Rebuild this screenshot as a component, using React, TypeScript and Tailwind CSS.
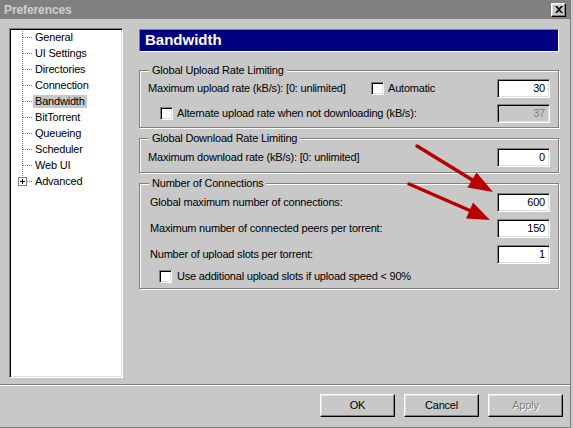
import React from "react";

const sunken =
  "border border-t-[#808080] border-l-[#808080] border-b-white border-r-white shadow-[inset_1px_1px_0_#000,inset_-1px_-1px_0_#dfdfdf]";
const raised =
  "border border-t-white border-l-white border-b-black border-r-black shadow-[inset_-1px_-1px_0_#808080,inset_1px_1px_0_#dfdfdf]";
const etched =
  "relative border border-[#808080] shadow-[inset_1px_1px_0_#fff,1px_1px_0_#fff]";

function Field({ value, disabled }: { value: string; disabled?: boolean }) {
  return (
    <div
      className={`${sunken} w-[53px] h-[19px] flex items-center justify-end pr-[4px] ${
        disabled ? "bg-[#c8c8c8] text-[#808080]" : "bg-white text-black"
      }`}
    >
      {value}
    </div>
  );
}

function Check() {
  return <div className={`${sunken} w-[13px] h-[13px] bg-white shrink-0`} />;
}

function Legend({ children }: { children: React.ReactNode }) {
  return (
    <div className="absolute -top-[7px] left-[9px] px-[3px] bg-[#c8c8c8] leading-[13px]">
      {children}
    </div>
  );
}

const treeItems = [
  "General",
  "UI Settings",
  "Directories",
  "Connection",
  "Bandwidth",
  "BitTorrent",
  "Queueing",
  "Scheduler",
  "Web UI",
  "Advanced",
];

function Tree() {
  return (
    <div className={`${sunken} relative w-[114px] h-[350px] bg-white`}>
      <svg className="absolute left-0 top-0" width="112" height="170">
        <line x1="12.5" y1="2" x2="12.5" y2="147" stroke="#808080" strokeDasharray="1 1" />
        {treeItems.slice(0, 9).map((_, i) => (
          <line
            key={i}
            x1="13"
            y1={8.5 + 16 * i}
            x2="23"
            y2={8.5 + 16 * i}
            stroke="#808080"
            strokeDasharray="1 1"
          />
        ))}
        <rect x="8.5" y="148.5" width="8" height="8" fill="white" stroke="#808080" />
        <line x1="10" y1="152.5" x2="15" y2="152.5" stroke="#000" />
        <line x1="12.5" y1="150" x2="12.5" y2="155" stroke="#000" />
        <line x1="17" y1="152.5" x2="23" y2="152.5" stroke="#808080" strokeDasharray="1 1" />
      </svg>
      <div className="relative flex flex-col">
        {treeItems.map((t) => (
          <div key={t} className="h-[16px] flex items-center pl-[23px]">
            <span
              className={`px-[2px] h-[13px] leading-[13px] ${
                t === "Bandwidth" ? "bg-[#c8c8c8]" : ""
              }`}
            >
              {t}
            </span>
          </div>
        ))}
      </div>
    </div>
  );
}

function Button({ label, disabled }: { label: string; disabled?: boolean }) {
  return (
    <div
      className={`${raised} w-[75px] h-[23px] flex items-center justify-center ${
        disabled ? "text-[#808080] [text-shadow:1px_1px_0_#fff]" : "text-black"
      }`}
    >
      {label}
    </div>
  );
}

export default function App() {
  return (
    <div
      className="relative w-[573px] h-[428px] bg-[#c8c8c8] text-[11px] tracking-[-0.2px] text-black overflow-hidden"
      style={{ fontFamily: '"Liberation Sans", Arial, sans-serif' }}
    >
      <div className="w-[571px] h-[428px] flex flex-col border-r border-b border-[#808080]">
        {/* Title bar */}
        <div className="h-[19px] bg-[#808080] flex items-center justify-between pl-[4px] pr-[4px] shrink-0">
          <span className="text-[12px] font-bold text-[#cfcfcf] tracking-[-0.1px]">Preferences</span>
          <div className={`${raised} w-[15px] h-[14px] bg-[#c8c8c8] flex items-center justify-center`}>
            <svg width="8" height="7" viewBox="0 0 8 7">
              <path d="M0 0h2l2 2 2-2h2L5 3.5 8 7H6L4 5 2 7H0l3-3.5z" fill="#000" />
            </svg>
          </div>
        </div>

        {/* Body */}
        <div className="h-[365px] flex pt-[9px] pl-[9px] shrink-0">
          <Tree />
          <div className="ml-[16px] w-[420px] mt-[1px] flex flex-col">
            <div className="h-[23px] bg-[#000080] border border-t-[#808080] border-l-[#808080] border-b-white border-r-white flex items-center pl-[5px]">
              <span className="text-[15px] font-bold text-white tracking-normal">Bandwidth</span>
            </div>

            {/* Group 1 */}
            <div className={`${etched} mt-[18px] h-[58px] pt-[8px] pb-[4px] pl-[8px] pr-[8px] flex flex-col gap-[6px]`}>
              <Legend>Global Upload Rate Limiting</Legend>
              <div className="h-[19px] flex items-center">
                <span className="w-[223px]">Maximum upload rate (kB/s): [0: unlimited]</span>
                <Check />
                <span className="ml-[4px]">Automatic</span>
                <div className="ml-auto">
                  <Field value="30" />
                </div>
              </div>
              <div className="h-[19px] flex items-center">
                <div className="ml-[12px]">
                  <Check />
                </div>
                <span className="ml-[4px]">Alternate upload rate when not downloading (kB/s):</span>
                <div className="ml-auto">
                  <Field value="37" disabled />
                </div>
              </div>
            </div>

            {/* Group 2 */}
            <div className={`${etched} mt-[10px] h-[35px] pt-[9px] pl-[8px] pr-[8px] flex flex-col`}>
              <Legend>Global Download Rate Limiting</Legend>
              <div className="h-[19px] flex items-center justify-between">
                <span>Maximum download rate (kB/s): [0: unlimited]</span>
                <Field value="0" />
              </div>
            </div>

            {/* Group 3 */}
            <div className={`${etched} mt-[10px] h-[106px] pt-[9px] pl-[10px] pr-[8px] flex flex-col`}>
              <Legend>Number of Connections</Legend>
              <div className="h-[19px] flex items-center justify-between">
                <span>Global maximum number of connections:</span>
                <Field value="600" />
              </div>
              <div className="h-[19px] mt-[7px] flex items-center justify-between">
                <span>Maximum number of connected peers per torrent:</span>
                <Field value="150" />
              </div>
              <div className="h-[19px] mt-[7px] flex items-center justify-between">
                <span>Number of upload slots per torrent:</span>
                <Field value="1" />
              </div>
              <div className="h-[13px] mt-[6px] flex items-center">
                <div className="ml-[9px]">
                  <Check />
                </div>
                <span className="ml-[5px]">Use additional upload slots if upload speed &lt; 90%</span>
              </div>
            </div>
          </div>
        </div>

        {/* Separator */}
        <div className="h-[2px] border-t border-t-[#808080] border-b border-b-white shrink-0" />

        {/* Buttons */}
        <div className="mt-[8px] flex justify-end gap-[9px] pr-[7px]">
          <Button label="OK" />
          <Button label="Cancel" />
          <Button label="Apply" disabled />
        </div>
      </div>

      {/* Annotation arrows */}
      <svg className="absolute left-0 top-0 pointer-events-none" width="573" height="428">
        <line x1="417" y1="146" x2="474" y2="181" stroke="#b80000" strokeWidth="3.5" strokeLinecap="round" />
        <polygon points="493,192 467.5,187.5 476.5,172.5" fill="#b80000" />
        <line x1="409" y1="184" x2="471" y2="211" stroke="#b80000" strokeWidth="3.5" strokeLinecap="round" />
        <polygon points="490,220 466,218.5 473,202.5" fill="#b80000" />
      </svg>
    </div>
  );
}
